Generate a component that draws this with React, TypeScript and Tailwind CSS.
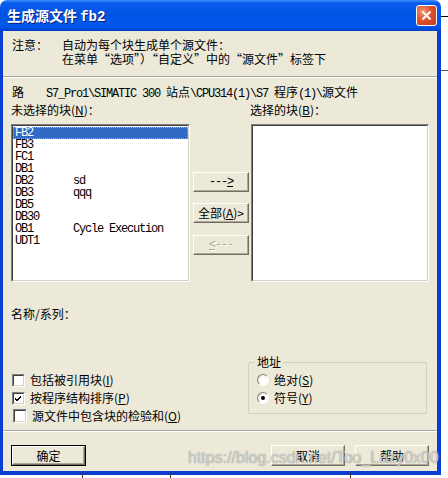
import type { ReactNode } from "react";

const cjk = "font-['Noto_Sans_CJK_SC',sans-serif]";
const mono = "font-['Liberation_Mono','Noto_Sans_CJK_SC',monospace] tracking-[-1.2px]";

const blocks = [
  ["FB2", ""],
  ["FB3", ""],
  ["FC1", ""],
  ["DB1", ""],
  ["DB2", "sd"],
  ["DB3", "qqq"],
  ["DB5", ""],
  ["DB30", ""],
  ["OB1", "Cycle Execution"],
  ["UDT1", ""],
];

function Button({
  children,
  def,
  disabled,
  className = "",
}: {
  children: ReactNode;
  def?: boolean;
  disabled?: boolean;
  className?: string;
}) {
  return (
    <div className={`${def ? "border border-black" : ""} ${className}`}>
      <div
        className={`flex h-full items-center justify-center border border-t-white border-l-white border-r-[#716F64] border-b-[#716F64] bg-[#ECE9D8] shadow-[inset_-1px_-1px_0_#ACA899] ${
          disabled ? "text-[#ACA899] [text-shadow:1px_1px_0_#fff]" : "text-black"
        }`}
      >
        {children}
      </div>
    </div>
  );
}

function Check({ checked, className = "" }: { checked?: boolean; className?: string }) {
  return (
    <div
      className={`h-[13px] w-[13px] shrink-0 border border-t-[#808080] border-l-[#808080] border-r-white border-b-white ${className}`}
    >
      <div className="flex h-full w-full items-center justify-center border border-t-[#404040] border-l-[#404040] border-r-[#D4D0C8] border-b-[#D4D0C8] bg-white">
        {checked && (
          <svg width="7" height="7" viewBox="0 0 7 7">
            <path d="M0 3 L2 5 L6 1 M0 4 L2 6 L6 2" stroke="#000" strokeWidth="1" fill="none" />
          </svg>
        )}
      </div>
    </div>
  );
}

function Radio({ checked }: { checked?: boolean }) {
  return (
    <div className="flex h-[12px] w-[12px] shrink-0 items-center justify-center rounded-full border border-t-[#808080] border-l-[#808080] border-r-white border-b-white bg-[radial-gradient(circle_at_60%_60%,#fff_40%,#DCD8C8_100%)]">
      {checked && <div className="h-[4px] w-[4px] rounded-full bg-black" />}
    </div>
  );
}

function Sep() {
  return (
    <div>
      <div className="h-px bg-[#ACA899]" />
      <div className="h-px bg-white" />
    </div>
  );
}

function M({ children }: { children: ReactNode }) {
  return <span className={mono}>{children}</span>;
}

export default function App() {
  return (
    <div className={`relative h-[478px] w-[448px] overflow-hidden bg-white text-[12px] leading-[14px] ${cjk}`}>
      {/* background window bits */}
      <div className="absolute right-0 top-[16px] h-px w-[7px] bg-black" />
      <div className="absolute right-0 top-[70px] h-px w-[7px] bg-[#555]" />
      <div className="absolute bottom-0 left-0 h-[5px] w-[448px]">
        <div className="absolute left-[82px] top-0 h-full w-px bg-[#333]" />
        <div className="absolute left-[170px] top-0 h-full w-px bg-[#333]" />
        <div className="absolute left-[350px] top-0 h-full w-px bg-[#333]" />
      </div>

      <div className="w-[441px]">
        {/* title bar */}
        <div className="flex h-[31px] items-center justify-between rounded-t-[7px] bg-[linear-gradient(180deg,#3D8DFC_0%,#0A5DEB_10%,#0054E3_45%,#0058EA_85%,#0040C8_100%)] pl-[7px] pr-[4px]">
          <span className="text-[14px] font-bold leading-[16px] text-white [text-shadow:1px_1px_0_#0A1E80]">
            生成源文件 <span className="font-['Liberation_Mono',monospace]">fb2</span>
          </span>
          <div className="flex h-[21px] w-[21px] items-center justify-center rounded-[3px] border border-white bg-[radial-gradient(circle_at_30%_30%,#F09A7A_0%,#E0502A_45%,#C23A1A_100%)]">
            <svg width="11" height="11" viewBox="0 0 11 11">
              <path d="M1.5 1.5 L9.5 9.5 M9.5 1.5 L1.5 9.5" stroke="#fff" strokeWidth="2" />
            </svg>
          </div>
        </div>

        {/* body */}
        <div className="border-x-0 border-b-[4px] border-l-[3px] border-r-[4px] border-solid border-[#0A3ED2] bg-[#ECE9D8]">
          <div className="flex px-[9px] pt-[7px]">
            <span className="w-[50px]">注意：</span>
            <div>
              <div>自动为每个块生成单个源文件：</div>
              <div>在菜单“选项”）“自定义”中的“源文件”标签下</div>
            </div>
          </div>
          <div className="mt-[10px]">
            <Sep />
          </div>
          <div className="mt-[7px] flex px-[9px]">
            <span className="w-[34px]">路</span>
            <span>
              <M>{"S7_Pro1\\SIMATIC 300 "}</M>
              站点
              <M>{"\\CPU314(1)\\S7 "}</M>
              程序
              <M>{"(1)\\"}</M>
              源文件
            </span>
          </div>

          <div className="mt-[2px] grid grid-cols-[179px_3px_56px_2px_178px] px-[8px]">
            <span>
              未选择的块(<u>N</u>)：
            </span>
            <span />
            <span />
            <span />
            <span className="-ml-px">
              选择的块(<u>B</u>)：
            </span>

            {/* left list */}
            <div className="mt-[7px] h-[158px] border border-t-[#808080] border-l-[#808080] border-r-white border-b-white">
              <div className="h-full border border-t-[#404040] border-l-[#404040] border-r-[#D4D0C8] border-b-[#D4D0C8] bg-white pt-px">
                {blocks.map(([name, desc], i) => (
                  <div
                    key={name}
                    className={`flex h-[12px] items-center pl-[2px] text-[12px] leading-[12px] ${mono} ${
                      i === 0
                        ? "border border-dotted border-[#E8A040] bg-[#316AC5] pl-px text-white"
                        : "text-black"
                    }`}
                  >
                    <span className="w-[58px]">{name}</span>
                    <span>{desc}</span>
                  </div>
                ))}
              </div>
            </div>
            <span />
            {/* middle buttons */}
            <div className="mt-[7px] flex flex-col pt-[48px]">
              <Button className="h-[20px]">
                <span className={mono}>
                  ---<u>&gt;</u>
                </span>
              </Button>
              <Button className="mt-[11px] h-[20px]">
                <span>
                  全部(<u>A</u>)&gt;
                </span>
              </Button>
              <Button disabled className="mt-[12px] h-[20px]">
                <span className={mono}>
                  <u>&lt;</u>---
                </span>
              </Button>
            </div>
            <span />
            {/* right list */}
            <div className="mt-[7px] h-[158px] border border-t-[#808080] border-l-[#808080] border-r-white border-b-white">
              <div className="h-full border border-t-[#404040] border-l-[#404040] border-r-[#D4D0C8] border-b-[#D4D0C8] bg-white" />
            </div>
          </div>

          <div className="mt-[25px] px-[8px]">名称/系列：</div>

          <div className="mt-[41px] flex justify-between pl-[9px] pr-[10px]">
            <div className="flex flex-col pt-[9px]">
              <div className="flex h-[18px] items-center gap-[5px]">
                <Check />
                <span>
                  包括被引用块(<u>I</u>)
                </span>
              </div>
              <div className="flex h-[18px] items-center gap-[5px]">
                <Check checked />
                <span>
                  按程序结构排序(<u>P</u>)
                </span>
              </div>
              <div className="flex h-[18px] items-center gap-[5px] pl-px">
                <Check className="h-[14px] w-[14px]" />
                <span>
                  源文件中包含块的检验和(<u>O</u>)
                </span>
              </div>
            </div>

            <div className="relative h-[52px] w-[179px] rounded-[2px] border border-[#D0D0BF] pl-[8px] pt-[8px]">
              <span className="absolute -top-[8px] left-[6px] bg-[#ECE9D8] px-[2px]">地址</span>
              <div className="flex h-[18px] items-center gap-[5px]">
                <Radio />
                <span>
                  绝对(<u>S</u>)
                </span>
              </div>
              <div className="flex h-[18px] items-center gap-[5px]">
                <Radio checked />
                <span>
                  符号(<u>Y</u>)
                </span>
              </div>
            </div>
          </div>

          <div className="mt-[5px]">
            <Sep />
          </div>

          <div className="flex justify-between px-[8px] pb-[5px] pt-[13px]">
            <Button def className="h-[21px] w-[75px]">
              确定
            </Button>
            <div className="flex gap-[10px]">
              <Button className="h-[21px] w-[74px]">取消</Button>
              <Button className="h-[21px] w-[74px]">帮助</Button>
            </div>
          </div>
        </div>
      </div>

      {/* watermark */}
      <div className="pointer-events-none absolute left-[188px] top-[448px] font-['Liberation_Sans',sans-serif] text-[16px] leading-[19px] text-[rgba(235,235,235,0.7)] [text-shadow:0_0_1px_rgba(90,90,90,0.8)]">
        https://blog.csdn.net/Too_Lazy0x00
      </div>
    </div>
  );
}
